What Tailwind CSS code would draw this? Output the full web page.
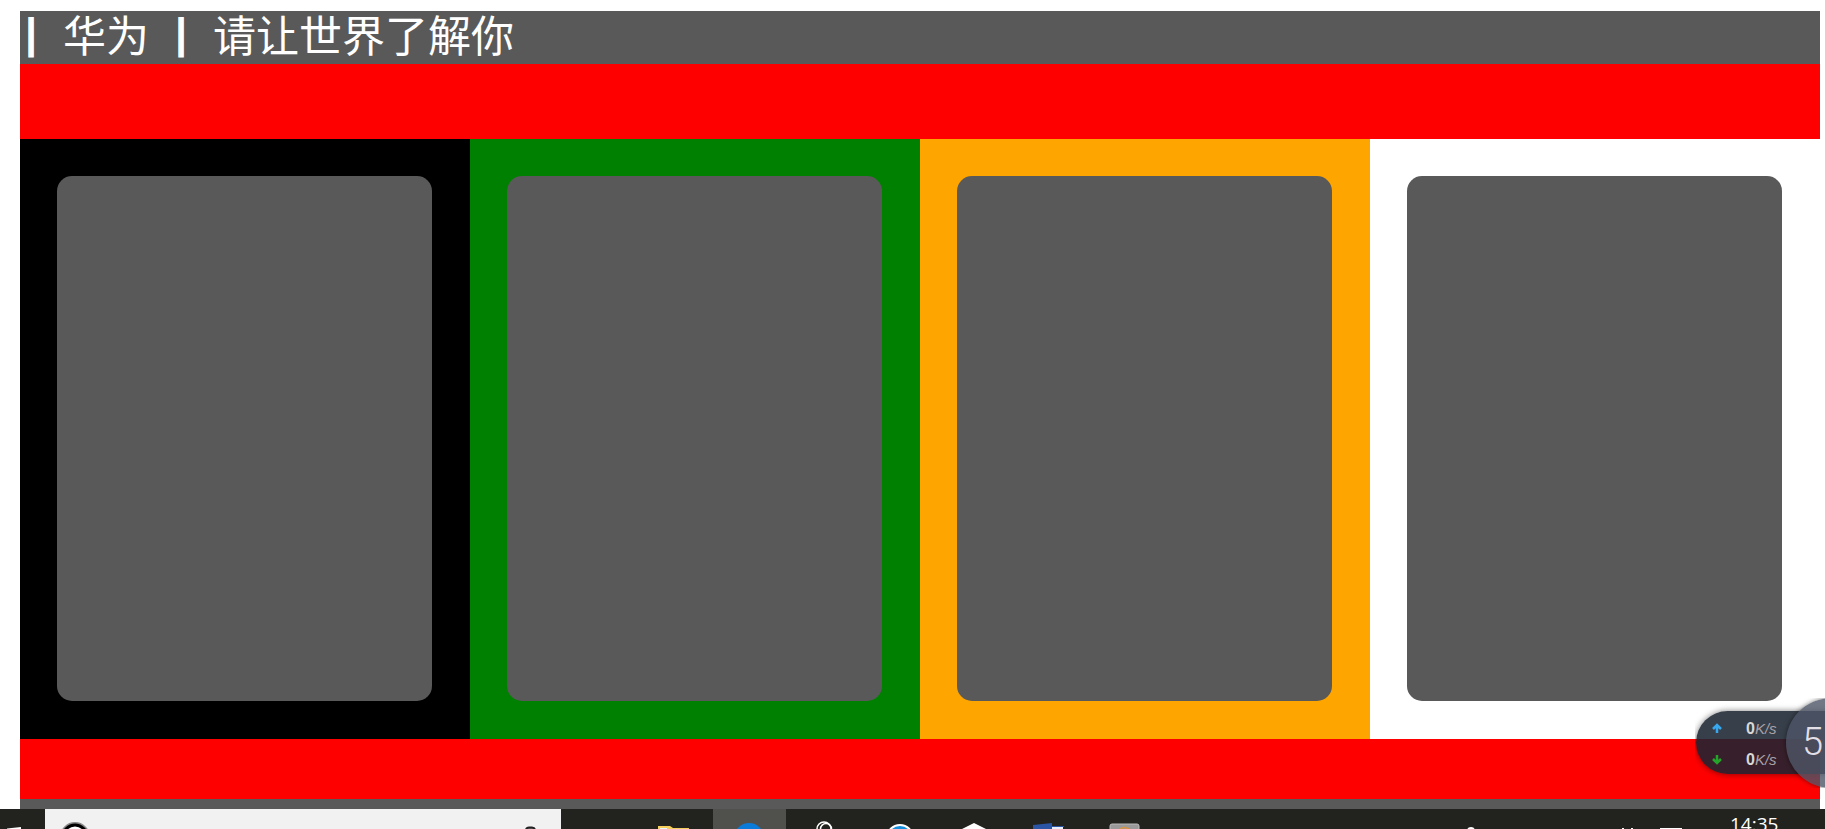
<!DOCTYPE html>
<html lang="zh-CN">
<head>
<meta charset="utf-8">
<title>华为</title>
<script src="https://cdn.jsdelivr.net/npm/@tailwindcss/browser@4"></script>
</head>
<body class="relative flex h-screen flex-col overflow-hidden bg-white font-['Noto_Sans','Noto_Sans_CJK_SC',sans-serif]">
  <div class="ml-5 mr-[5px] mt-[11px] flex flex-1 flex-col bg-[#595959]">
    <header class="h-[53px]">
      <h1 class="flex gap-[21px] font-['KaiTi','Noto_Sans_CJK_SC',sans-serif] text-[43px] leading-[44px] text-white">
        <span class="w-[22px] text-center font-['Liberation_Sans',sans-serif] font-bold">|</span>
        <span>华为</span>
        <span class="w-[22px] text-center font-['Liberation_Sans',sans-serif] font-bold">|</span>
        <span>请让世界了解你</span>
      </h1>
    </header>
    <div class="h-[75px] bg-[#ff0000]"></div>
    <main class="grid h-[600px] grid-cols-4">
      <section class="bg-black pt-[37px] pr-[38px] pb-[38px] pl-[37px]"><div class="h-full rounded-[15px] bg-[#595959]"></div></section>
      <section class="bg-[#008000] pt-[37px] pr-[38px] pb-[38px] pl-[37px]"><div class="h-full rounded-[15px] bg-[#595959]"></div></section>
      <section class="bg-[#ffa500] pt-[37px] pr-[38px] pb-[38px] pl-[37px]"><div class="h-full rounded-[15px] bg-[#595959]"></div></section>
      <section class="bg-white pt-[37px] pr-[38px] pb-[38px] pl-[37px]"><div class="h-full rounded-[15px] bg-[#595959]"></div></section>
    </main>
    <div class="h-[60px] bg-[#ff0000]"></div>
  </div>

  <footer class="flex h-5 shrink-0 overflow-hidden bg-[#22231e] text-white">
    <button aria-label="开始" class="h-5 w-[45px]"><svg class="block h-5 w-[45px]" viewBox="0 0 45 20"><path d="M7 20 L7 19.5 L21 18 V20Z" fill="#fff"/></svg></button>
    <button aria-label="搜索" class="flex h-5 w-[516px] justify-between bg-[#f1f1f1]">
      <svg class="block h-5 w-[60px]" viewBox="0 0 60 20"><circle cx="30" cy="28" r="13" fill="none" stroke="#888" stroke-width="4"/><circle cx="30" cy="28" r="12" fill="#fff" stroke="#000" stroke-width="3"/></svg>
      <svg class="block h-5 w-[40px]" viewBox="0 0 40 20"><rect x="5" y="18.500" width="9" height="14" rx="3" fill="#777" stroke="#222" stroke-width="2"/></svg>
    </button>
    <div class="w-[79px]"></div>
    <button aria-label="文件资源管理器" class="h-5 w-[73px]"><svg class="block h-5 w-[73px]" viewBox="0 0 73 20"><path d="M18 20V17H30L33 19H49V20Z" fill="#f7cf5c"/><path d="M20 19h7v1h-7z" fill="#e8f6ff"/></svg></button>
    <button aria-label="浏览器" class="h-5 w-[73px] bg-[#50514d]"><svg class="block h-5 w-[73px]" viewBox="0 0 73 20"><circle cx="36" cy="29" r="15" fill="#0a7bd8"/></svg></button>
    <button aria-label="工具" class="h-5 w-[76px]"><svg class="block h-5 w-[76px]" viewBox="0 0 76 20" fill="none" stroke="#fff"><circle cx="38" cy="20" r="7" stroke-width="1.500"/><circle cx="40" cy="20" r="5.500" stroke-width="1.500"/></svg></button>
    <button aria-label="蓝色应用" class="h-5 w-[74px]"><svg class="block h-5 w-[74px]" viewBox="0 0 74 20"><circle cx="38" cy="29" r="13" fill="#148fdd" stroke="#fff" stroke-width="2"/></svg></button>
    <button aria-label="六边形应用" class="h-5 w-[74px]"><svg class="block h-5 w-[74px]" viewBox="0 0 74 20"><path d="M26 20L38 14L50 20Z" fill="#fff"/></svg></button>
    <button aria-label="Word" class="h-5 w-[76px]"><svg class="block h-5 w-[76px]" viewBox="0 0 76 20"><path d="M42 18H53V20H42Z" fill="#e8eefa"/><path d="M23 16L42 14V17H54V18H42V20H23Z" fill="#2a56a5"/></svg></button>
    <button aria-label="文本编辑器" class="h-5 w-[76px]"><svg class="block h-5 w-[76px]" viewBox="0 0 76 20"><rect x="24" y="15" width="29" height="12" rx="2" fill="#999" stroke="#bbb"/><path d="M34 20q4-3 9 0" fill="none" stroke="#d9943c" stroke-width="1.500"/></svg></button>
    <div class="ml-auto flex">
      <svg class="block h-5 w-[230px]" viewBox="0 0 230 20" fill="#fff"><circle cx="6" cy="22" r="4"/><path d="M157 19h2v1h-2zM166 19h2v1h-2zM195 19h22v1h-22z"/></svg>
      <time class="w-[130px] pl-[35px] pt-[4px] font-['Open_Sans',sans-serif] text-[19px] leading-[22px]">14:35</time>
    </div>
  </footer>

  <aside class="absolute right-0 top-[698px] h-[90px] w-[130px] overflow-hidden">
    <div class="absolute left-[1px] top-[13px] h-[63px] w-[160px] rounded-full bg-[#1b2431]/88 shadow-[0_0_6px_rgba(0,0,0,0.5)]">
      <div class="flex h-[32px] items-center pl-4 pt-[3px] font-['Liberation_Sans',sans-serif] leading-5">
        <svg class="h-3 w-[34px]" viewBox="0 0 34 12"><path d="M5 10V2M1 6L5 2L9 6" fill="none" stroke="#38a8ee" stroke-width="2.500"/></svg>
        <span class="text-[16px] font-bold text-[#d8d8d8]">0</span><span class="text-[15px] italic text-[#aaa2a8]">K/s</span>
      </div>
      <div class="flex h-[31px] items-center pl-4 pt-[2px] font-['Liberation_Sans',sans-serif] leading-5">
        <svg class="h-3 w-[34px]" viewBox="0 0 34 12"><path d="M5 1V9M1 5L5 9L9 5" fill="none" stroke="#24a52a" stroke-width="2.500"/></svg>
        <span class="text-[16px] font-bold text-[#d8d8d8]">0</span><span class="text-[15px] italic text-[#aaa2a8]">K/s</span>
      </div>
    </div>
    <div class="absolute left-[91px] top-0 size-[90px] rounded-full bg-[#4d5567]/80 pl-4 font-['Roboto',sans-serif] text-[38px] font-light leading-[88px] text-[#e3dfe6] shadow-[0_0_5px_rgba(0,0,0,0.5)]">5</div>
  </aside>
</body>
</html>
